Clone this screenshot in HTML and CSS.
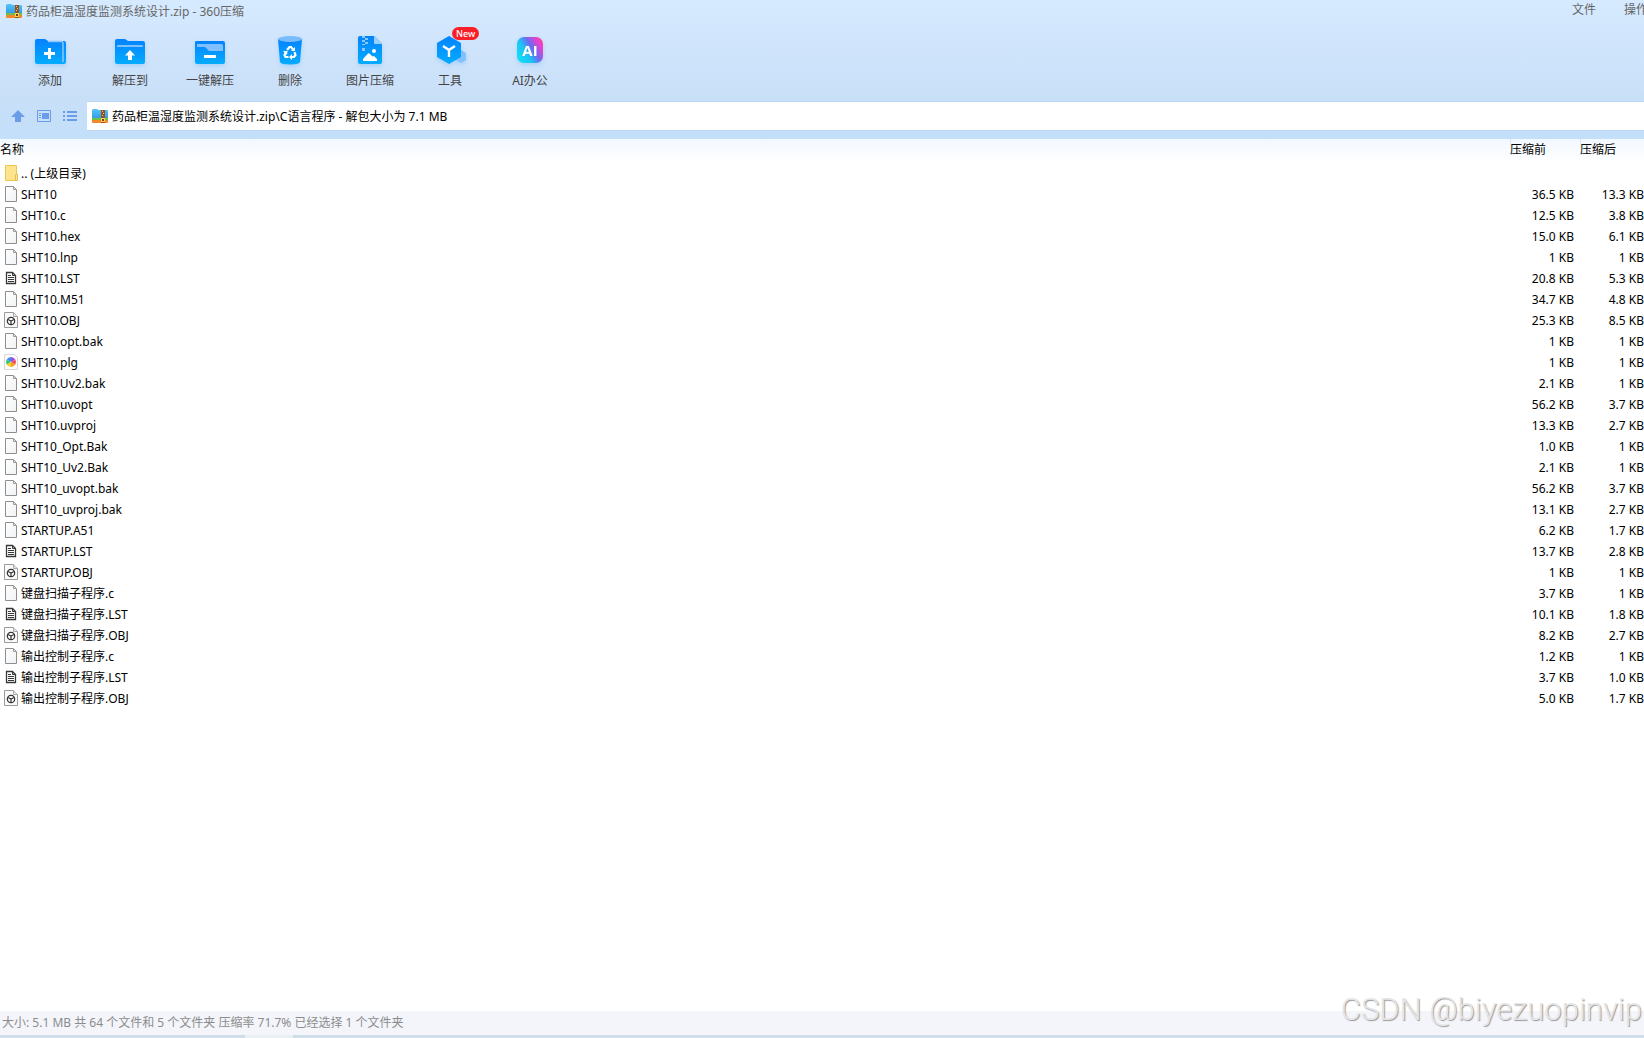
FILE: index.html
```
<!DOCTYPE html>
<html lang="zh-CN">
  <head>
    <meta charset="utf-8" />
    <title>药品柜温湿度监测系统设计.zip - 360压缩</title>
    <link rel="stylesheet" href="styles.css">
  </head>
  <body>
    <svg class="defs" aria-hidden="true">
      <defs>
        <linearGradient id="blue" x1="0" y1="0" x2="0" y2="1">
          <stop offset="0" stop-color="#0482fc" />
          <stop offset="1" stop-color="#04acff" />
        </linearGradient>
        <linearGradient id="sky" x1="0" y1="0" x2="0" y2="1">
          <stop offset="0" stop-color="#54c4f8" />
          <stop offset="1" stop-color="#2a96e4" />
        </linearGradient>
        <linearGradient id="ai" x1="0" y1="0.7" x2="1" y2="0.1">
          <stop offset="0" stop-color="#12dcf4" />
          <stop offset="0.3" stop-color="#1cc4f6" />
          <stop offset="0.55" stop-color="#6a6cf0" />
          <stop offset="0.82" stop-color="#e840d0" />
          <stop offset="1" stop-color="#fc4a88" />
        </linearGradient>
        <linearGradient id="paper" x1="0" y1="0" x2="1" y2="1">
          <stop offset="0" stop-color="#fff" />
          <stop offset="1" stop-color="#f0f2f4" />
        </linearGradient>
      </defs>
      <symbol id="zip" viewBox="0 0 16 14">
        <path d="M0 1.500Q0 0 1.500 0H5L6.500 1H15Q16 1 16 2V11H0z" fill="url(#sky)" />
        <path d="M0 9H16V11H0z" fill="#6cc04a" />
        <path d="M0 11H16V13Q16 14 15 14H1Q0 14 0 13z" fill="#f6862c" />
        <path d="M9 1H13V14H9z" fill="#96501c" />
        <path d="M10 2H11V3H10zM11 4H12V5H11zM10 6H11V7H10z" fill="#f4c878" />
        <path d="M9 9H13V13H9z" fill="#ffd65c" />
        <path d="M10 10H12V12H10z" fill="#7a3c10" />
      </symbol>
      <symbol id="doc" viewBox="0 0 14 17">
        <path d="M1.500 .5H9.500L12.500 3.500V15.500H1.500z" fill="url(#paper)" stroke="#8e8e8e" />
        <path d="M9.500 1V3.500H12" fill="#e2e2e2" stroke="#9c9c9c" />
      </symbol>
      <symbol id="lst" viewBox="0 0 14 17">
        <path d="M2.500 2.500H8.500L11.500 5.500V13.500H2.500z" fill="#fff" stroke="#383838" stroke-width="1.300" />
        <path d="M8.500 2.500V5.500H11.500" fill="none" stroke="#383838" />
        <path d="M4 5.500H7M4 7.500H10M4 9.500H10M4 11.500H10" stroke="#383838" />
      </symbol>
      <symbol id="obj" viewBox="0 0 14 17">
        <path d="M.5 .5H9.500L13.500 4.500V15.500H.5z" fill="#fafafa" stroke="#9a9a9a" />
        <path d="M9.500 .5V4.500H13.500" fill="#e4e4e4" stroke="#a8a8a8" />
        <circle cx="7" cy="9" r="3.700" fill="#fff" stroke="#333" stroke-width="1.200" />
        <path d="M4 7.500L7 9L10 7.500M7 9V12.500" fill="none" stroke="#333" stroke-width="1.200" />
      </symbol>
      <symbol id="plg" viewBox="0 0 14 17">
        <path d="M.5 .5H10.500L13.500 3.500V15.500H.5z" fill="#fdfdfd" stroke="#d8d8d8" />
        <path d="M7 8V3A5 5 0 0 1 11.300 5.500z" fill="#a24ce8" />
        <path d="M7 8L11.300 5.500A5 5 0 0 1 11.300 10.500z" fill="#f4485c" />
        <path d="M7 8L11.300 10.500A5 5 0 0 1 7 13z" fill="#fc9a24" />
        <path d="M7 8V13A5 5 0 0 1 2.700 10.500z" fill="#f4d21c" />
        <path d="M7 8L2.700 10.500A5 5 0 0 1 2.700 5.500z" fill="#34c878" />
        <path d="M7 8L2.700 5.500A5 5 0 0 1 7 3z" fill="#3c8cf4" />
      </symbol>
      <symbol id="folder" viewBox="0 0 14 17">
        <path d="M1.500 .5H12.500V15.500H1.500z" fill="#ffe48e" stroke="#ecc850" />
        <path d="M11.500 9.500H13.500V15.500H11.500z" fill="#ffe9a0" stroke="#e6bf48" />
      </symbol>
    </svg>

    <header class="head">
      <div class="titlebar">
        <svg class="zip-icon"><use href="#zip" /></svg>
        <h1 class="title">药品柜温湿度监测系统设计.zip - 360压缩</h1>
        <nav class="menu">
          <a href="#">文件</a>
          <a href="#">操作</a>
        </nav>
      </div>

      <div class="toolbar">
        <button class="tool" type="button">
          <svg class="tool-icon" viewBox="0 0 40 36">
            <path d="M5 6Q5 4 7 4H15L18 6H34Q36 6 36 8V27Q36 29 34 29H7Q5 29 5 27z" fill="url(#blue)" />
            <path d="M18 6.500H31Q33 6.500 33 8.500V27" fill="none" stroke="#8cc8fc" stroke-width="1.500" />
            <path d="M19.500 13V24M14 18.500H25" stroke="#fff" stroke-width="3" />
          </svg>
          <span>添加</span>
        </button>
        <button class="tool" type="button">
          <svg class="tool-icon" viewBox="0 0 40 36">
            <path d="M5 6Q5 4 7 4H15L18 6H33Q35 6 35 8V27Q35 29 33 29H7Q5 29 5 27z" fill="url(#blue)" />
            <path d="M7 12V11Q7 10 8 10H32Q33 10 33 11V12z" fill="#80c0fc" />
            <path d="M20 15L25 20.500H22V25H18V20.500H15z" fill="#fff" />
          </svg>
          <span>解压到</span>
        </button>
        <button class="tool" type="button">
          <svg class="tool-icon" viewBox="0 0 40 36">
            <path d="M5 7Q5 6 7 6H33Q35 6 35 8V27Q35 29 33 29H7Q5 29 5 27z" fill="url(#blue)" />
            <path d="M7 9H31Q33 9 33 11V16H19L15 12H7z" fill="#80c0fc" />
            <path d="M14 21.500H26" stroke="#fff" stroke-width="3" />
          </svg>
          <span>一键解压</span>
        </button>
        <button class="tool" type="button">
          <svg class="tool-icon" viewBox="0 0 40 36">
            <path d="M8 4H32L30 27Q29 29.500 20 29.500Q11 29.500 10 27z" fill="url(#blue)" />
            <ellipse cx="20" cy="4" rx="12" ry="3" fill="#78bcfc" />
            <g fill="none" stroke="#fff" stroke-width="2.200">
              <path d="M17 15L19.500 12H21L23 14.500" />
              <path d="M24.500 17L25.500 20L24 22H21" />
              <path d="M18.500 22H15.500L14.500 20L16 17" />
            </g>
            <path d="M25 12V16H21zM22 19V25L19 22zM13 16H17.500L17 20z" fill="#fff" />
          </svg>
          <span>删除</span>
        </button>
        <button class="tool" type="button">
          <svg class="tool-icon" viewBox="0 0 40 36">
            <path d="M8 3Q8 1 10 1H24L32 9V27Q32 29 30 29H10Q8 29 8 27z" fill="url(#blue)" />
            <path d="M24 1L32 9H25Q24 9 24 8z" fill="#9cd0fc" />
            <path d="M12 1H15V3H12zM15 3H18V5H15zM12 5H15V7H12zM15 7H18V9H15zM12 9H15V10H12zM12 13H15V16H12z" fill="#8cc8fc" />
            <circle cx="24" cy="16" r="2" fill="#fff" />
            <path d="M13 26V24L18 18.500Q19 18 20 19L22.500 21.500L24 21L27 24V26z" fill="#fff" />
          </svg>
          <span>图片压缩</span>
        </button>
        <button class="tool" type="button">
          <svg class="tool-icon" viewBox="0 0 40 36">
            <path d="M31 15L36 18V25L31 28L26 25V18z" fill="#80c0fc" />
            <path d="M19 1L31 8V22L19 29L7 22V8z" fill="url(#blue)" />
            <path d="M13 11L19 15L25 11M19 15V22" fill="none" stroke="#fff" stroke-width="2.400" />
          </svg>
          <span>工具</span>
          <b class="badge">New</b>
        </button>
        <button class="tool" type="button">
          <svg class="tool-icon" viewBox="0 0 40 36">
            <rect x="7" y="2" width="26" height="26" rx="7" fill="url(#ai)" />
            <text class="ai-text" x="20" y="21" text-anchor="middle">AI</text>
          </svg>
          <span>AI办公</span>
        </button>
      </div>

      <div class="pathbar">
        <div class="path-buttons">
          <button class="path-button" type="button" aria-label="向上">
            <svg viewBox="0 0 14 14"><path d="M7 1L14 8H10V13H4V8H0z" fill="#6a9ce8" /></svg>
          </button>
          <button class="path-button" type="button" aria-label="预览">
            <svg viewBox="0 0 14 14">
              <path d="M.5 1.500H13.500V12.500H.5z" fill="none" stroke="#6a9ce8" />
              <path d="M5 4H12V10H5zM2 4H4V5H2zM2 6H4V7H2zM2 8H4V9H2z" fill="#6a9ce8" />
            </svg>
          </button>
          <button class="path-button" type="button" aria-label="列表">
            <svg viewBox="0 0 14 14"><path d="M0 2H2V4H0zM4 2H14V4H4zM0 6H2V8H0zM4 6H14V8H4zM0 10H2V12H0zM4 10H14V12H4z" fill="#6a9ce8" /></svg>
          </button>
        </div>
        <label class="path">
          <svg class="zip-icon"><use href="#zip" /></svg>
          <input type="text" aria-label="路径" value="药品柜温湿度监测系统设计.zip\C语言程序 - 解包大小为 7.1 MB" />
        </label>
      </div>
    </header>

    <main class="list">
      <table class="files">
        <thead>
          <tr><th>名称</th><th class="size">压缩前</th><th class="packed">压缩后</th></tr>
        </thead>
        <tbody>
          <tr><td><svg><use href="#folder" /></svg>.. (上级目录)</td><td></td><td></td></tr>
          <tr><td><svg><use href="#doc" /></svg>SHT10</td><td>36.5 KB</td><td>13.3 KB</td></tr>
          <tr><td><svg><use href="#doc" /></svg>SHT10.c</td><td>12.5 KB</td><td>3.8 KB</td></tr>
          <tr><td><svg><use href="#doc" /></svg>SHT10.hex</td><td>15.0 KB</td><td>6.1 KB</td></tr>
          <tr><td><svg><use href="#doc" /></svg>SHT10.lnp</td><td>1 KB</td><td>1 KB</td></tr>
          <tr><td><svg><use href="#lst" /></svg>SHT10.LST</td><td>20.8 KB</td><td>5.3 KB</td></tr>
          <tr><td><svg><use href="#doc" /></svg>SHT10.M51</td><td>34.7 KB</td><td>4.8 KB</td></tr>
          <tr><td><svg><use href="#obj" /></svg>SHT10.OBJ</td><td>25.3 KB</td><td>8.5 KB</td></tr>
          <tr><td><svg><use href="#doc" /></svg>SHT10.opt.bak</td><td>1 KB</td><td>1 KB</td></tr>
          <tr><td><svg><use href="#plg" /></svg>SHT10.plg</td><td>1 KB</td><td>1 KB</td></tr>
          <tr><td><svg><use href="#doc" /></svg>SHT10.Uv2.bak</td><td>2.1 KB</td><td>1 KB</td></tr>
          <tr><td><svg><use href="#doc" /></svg>SHT10.uvopt</td><td>56.2 KB</td><td>3.7 KB</td></tr>
          <tr><td><svg><use href="#doc" /></svg>SHT10.uvproj</td><td>13.3 KB</td><td>2.7 KB</td></tr>
          <tr><td><svg><use href="#doc" /></svg>SHT10_Opt.Bak</td><td>1.0 KB</td><td>1 KB</td></tr>
          <tr><td><svg><use href="#doc" /></svg>SHT10_Uv2.Bak</td><td>2.1 KB</td><td>1 KB</td></tr>
          <tr><td><svg><use href="#doc" /></svg>SHT10_uvopt.bak</td><td>56.2 KB</td><td>3.7 KB</td></tr>
          <tr><td><svg><use href="#doc" /></svg>SHT10_uvproj.bak</td><td>13.1 KB</td><td>2.7 KB</td></tr>
          <tr><td><svg><use href="#doc" /></svg>STARTUP.A51</td><td>6.2 KB</td><td>1.7 KB</td></tr>
          <tr><td><svg><use href="#lst" /></svg>STARTUP.LST</td><td>13.7 KB</td><td>2.8 KB</td></tr>
          <tr><td><svg><use href="#obj" /></svg>STARTUP.OBJ</td><td>1 KB</td><td>1 KB</td></tr>
          <tr><td><svg><use href="#doc" /></svg>键盘扫描子程序.c</td><td>3.7 KB</td><td>1 KB</td></tr>
          <tr><td><svg><use href="#lst" /></svg>键盘扫描子程序.LST</td><td>10.1 KB</td><td>1.8 KB</td></tr>
          <tr><td><svg><use href="#obj" /></svg>键盘扫描子程序.OBJ</td><td>8.2 KB</td><td>2.7 KB</td></tr>
          <tr><td><svg><use href="#doc" /></svg>输出控制子程序.c</td><td>1.2 KB</td><td>1 KB</td></tr>
          <tr><td><svg><use href="#lst" /></svg>输出控制子程序.LST</td><td>3.7 KB</td><td>1.0 KB</td></tr>
          <tr><td><svg><use href="#obj" /></svg>输出控制子程序.OBJ</td><td>5.0 KB</td><td>1.7 KB</td></tr>
        </tbody>
      </table>
    </main>

    <footer class="status">大小: 5.1 MB 共 64 个文件和 5 个文件夹 压缩率 71.7% 已经选择 1 个文件夹</footer>
    <div class="edge"></div>
    <div class="watermark">CSDN @biyezuopinvip</div>
  </body>
</html>
```
FILE: styles.css
```
* {
  box-sizing: border-box;
}
html,
body {
  height: 100%;
}
body {
  display: flex;
  flex-direction: column;
  margin: 0;
  overflow: hidden;
  font-family: "Noto Sans", "Noto Sans CJK SC", sans-serif;
  font-size: 12px;
  line-height: 20px;
  color: #000;
  background-color: #fff;
}
button,
input {
  padding: 0;
  border: 0;
  background: none;
  font: inherit;
  color: inherit;
}
svg {
  display: block;
  flex: none;
}
.defs {
  position: absolute;
  width: 0;
  height: 0;
}
.head {
  background: linear-gradient(#d6eaff, #c8dff8 101px, #c3dff9);
}

/* title bar */
.titlebar {
  display: flex;
  padding: 2px 0 0 6px;
  color: #666;
}
.zip-icon {
  width: 16px;
  height: 14px;
}
.titlebar .zip-icon {
  margin: 2px 4px 0 0;
}
.title {
  flex: 1;
  margin: 0;
  font-size: 12px;
  font-weight: normal;
}
.menu {
  display: flex;
  gap: 28px;
  width: 72px;
  margin-top: -2px;
  white-space: nowrap;
}
.menu a {
  flex: none;
  color: #666;
  text-decoration: none;
}

/* toolbar */
.toolbar {
  display: flex;
  padding: 13px 10px 10px;
}
.tool {
  position: relative;
  display: flex;
  flex-direction: column;
  align-items: center;
  width: 80px;
  color: #444;
}
.tool-icon {
  width: 40px;
  height: 36px;
  filter: drop-shadow(0 2px 2px rgba(60, 150, 240, 0.25));
}
.ai-text {
  font: bold 15px "Open Sans", sans-serif;
  fill: #fff;
}
.badge {
  position: absolute;
  top: -8px;
  left: 42px;
  padding: 0 4px;
  border-radius: 7px;
  background-color: #fa1e28;
  color: #fff;
  font-size: 9px;
  font-weight: 500;
  line-height: 13px;
}

/* path bar */
.pathbar {
  display: flex;
  padding-bottom: 8px;
}
.path-buttons {
  display: flex;
  align-items: center;
  gap: 12px;
  width: 87px;
  padding-left: 11px;
}
.path-button,
.path-button svg {
  width: 14px;
  height: 14px;
}
.path {
  display: flex;
  flex: 1;
  align-items: center;
  gap: 4px;
  height: 30px;
  padding-left: 5px;
  border: 1px solid #bcd8f4;
  border-width: 1px 0 1px 0;
  background-color: #fff;
}
.path input {
  flex: 1;
  padding-top: 2px;
  outline: 0;
}

/* file list */
.list {
  flex: 1;
}
.files {
  width: 100%;
  table-layout: fixed;
  border-collapse: collapse;
}
.files th {
  height: 25px;
  padding: 1px 0 0;
  font-weight: normal;
  text-align: left;
  vertical-align: top;
}
.files thead {
  background: linear-gradient(#f2f8ff, #fff);
}
.files .size {
  width: 70px;
}
.files .packed {
  width: 64px;
}
.files .size,
.files .packed {
  background: linear-gradient(#cfe4f8, #fff) no-repeat left top / 1px 16px;
}
.files td {
  height: 21px;
  padding: 0;
  text-align: right;
  vertical-align: top;
  white-space: nowrap;
}
.files td:nth-child(2) {
  padding-right: 6px;
}
.files td:first-child {
  display: flex;
  gap: 3px;
  padding-left: 4px;
  text-align: left;
}
.files td svg {
  width: 14px;
  height: 17px;
  margin-top: 1px;
}

/* status bar */
.status {
  padding: 2px;
  background-color: #f3f5fa;
  color: #8c8c8c;
}
.edge {
  height: 3px;
  background: linear-gradient(#e8f0f4, #e8f0f4) no-repeat 245px 0 / 48px 3px #cfdee8;
}
.watermark {
  position: absolute;
  right: 2px;
  bottom: 8px;
  font: 300 31px/40px Roboto, sans-serif;
  color: #e6e6e8;
  text-shadow: 1px 1px 1px #999;
}
```
